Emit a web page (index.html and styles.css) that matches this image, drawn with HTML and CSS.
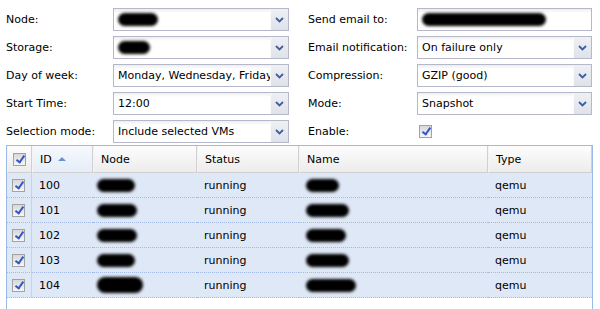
FILE: index.html
```html
<!DOCTYPE html>
<html lang="en">
<head>
<meta charset="UTF-8">
<title>Backup Job</title>
<link rel="stylesheet" href="styles.css">
</head>
<body>
<div class="form">
    <label class="lbl">Node:</label>
    <div class="combo"><div class="combo-text"><span class="blot w40"></span></div><div class="trigger"><svg width="9" height="6" viewBox="0 0 9 6"><path d="M1 1 L4.5 4.5 L8 1" fill="none" stroke="#3d5f9e" stroke-width="1.8"/></svg></div></div>
    <label class="lbl lbl-r">Send email to:</label>
    <div class="combo"><div class="combo-text"><span class="blot w124"></span></div></div>

    <label class="lbl">Storage:</label>
    <div class="combo"><div class="combo-text"><span class="blot w32"></span></div><div class="trigger"><svg width="9" height="6" viewBox="0 0 9 6"><path d="M1 1 L4.5 4.5 L8 1" fill="none" stroke="#3d5f9e" stroke-width="1.8"/></svg></div></div>
    <label class="lbl lbl-r">Email notification:</label>
    <div class="combo"><div class="combo-text">On failure only</div><div class="trigger"><svg width="9" height="6" viewBox="0 0 9 6"><path d="M1 1 L4.5 4.5 L8 1" fill="none" stroke="#3d5f9e" stroke-width="1.8"/></svg></div></div>

    <label class="lbl">Day of week:</label>
    <div class="combo"><div class="combo-text">Monday, Wednesday, Friday</div><div class="trigger"><svg width="9" height="6" viewBox="0 0 9 6"><path d="M1 1 L4.5 4.5 L8 1" fill="none" stroke="#3d5f9e" stroke-width="1.8"/></svg></div></div>
    <label class="lbl lbl-r">Compression:</label>
    <div class="combo"><div class="combo-text">GZIP (good)</div><div class="trigger"><svg width="9" height="6" viewBox="0 0 9 6"><path d="M1 1 L4.5 4.5 L8 1" fill="none" stroke="#3d5f9e" stroke-width="1.8"/></svg></div></div>

    <label class="lbl">Start Time:</label>
    <div class="combo"><div class="combo-text">12:00</div><div class="trigger"><svg width="9" height="6" viewBox="0 0 9 6"><path d="M1 1 L4.5 4.5 L8 1" fill="none" stroke="#3d5f9e" stroke-width="1.8"/></svg></div></div>
    <label class="lbl lbl-r">Mode:</label>
    <div class="combo"><div class="combo-text">Snapshot</div><div class="trigger"><svg width="9" height="6" viewBox="0 0 9 6"><path d="M1 1 L4.5 4.5 L8 1" fill="none" stroke="#3d5f9e" stroke-width="1.8"/></svg></div></div>

    <label class="lbl">Selection mode:</label>
    <div class="combo"><div class="combo-text">Include selected VMs</div><div class="trigger"><svg width="9" height="6" viewBox="0 0 9 6"><path d="M1 1 L4.5 4.5 L8 1" fill="none" stroke="#3d5f9e" stroke-width="1.8"/></svg></div></div>
    <label class="lbl lbl-r">Enable:</label>
    <div class="check-field"><span class="cb"></span></div>
</div>

<div class="grid">
    <table>
        <colgroup>
            <col class="c-check">
            <col class="c-id">
            <col class="c-node">
            <col class="c-status">
            <col class="c-name">
            <col>
        </colgroup>
        <thead>
            <tr>
                <th class="checker"><span class="cb"></span></th>
                <th class="sorted">ID <span class="sort-asc"></span></th>
                <th>Node</th>
                <th>Status</th>
                <th>Name</th>
                <th>Type</th>
            </tr>
        </thead>
        <tbody>
            <tr>
                <td class="checker"><span class="cb"></span></td>
                <td>100</td>
                <td class="pad-node"><span class="blot w38"></span></td>
                <td>running</td>
                <td><span class="blot w33"></span></td>
                <td>qemu</td>
            </tr>
            <tr>
                <td class="checker"><span class="cb"></span></td>
                <td>101</td>
                <td class="pad-node"><span class="blot w40"></span></td>
                <td>running</td>
                <td><span class="blot w43"></span></td>
                <td>qemu</td>
            </tr>
            <tr>
                <td class="checker"><span class="cb"></span></td>
                <td>102</td>
                <td class="pad-node"><span class="blot w40"></span></td>
                <td>running</td>
                <td><span class="blot w40"></span></td>
                <td>qemu</td>
            </tr>
            <tr>
                <td class="checker"><span class="cb"></span></td>
                <td>103</td>
                <td class="pad-node"><span class="blot w38"></span></td>
                <td>running</td>
                <td><span class="blot w43"></span></td>
                <td>qemu</td>
            </tr>
            <tr>
                <td class="checker"><span class="cb"></span></td>
                <td>104</td>
                <td class="pad-node"><span class="blot w46 tall"></span></td>
                <td>running</td>
                <td><span class="blot w50"></span></td>
                <td>qemu</td>
            </tr>
        </tbody>
    </table>
</div>
</body>
</html>
```

FILE: styles.css
```css
/* backup job editor, grey ext-like theme */
body {
    margin: 0;
    background: #fff;
    font-family: "DejaVu Sans", Tahoma, sans-serif;
    font-size: 11px;
    color: #000;
    overflow: hidden;
}

.form {
    display: grid;
    grid-template-columns: 107px 176px 128px 175px;
    grid-auto-rows: 23px;
    row-gap: 5px;
    padding: 8px 0 0 6px;
}

.lbl {
    display: flex;
    align-items: center;
}

.lbl-r {
    padding-left: 19px;
}

.combo {
    display: flex;
    border: 1px solid #b5b8c8;
    background: linear-gradient(#eeeeee, #ffffff 4px);
    overflow: hidden;
}

.combo-text {
    flex: 1;
    display: flex;
    align-items: center;
    padding: 0 4px;
    white-space: nowrap;
    overflow: hidden;
}

.trigger {
    width: 17px;
    display: flex;
    align-items: center;
    justify-content: center;
    border-left: 1px solid #fafafa;
    background: linear-gradient(#eef0f4, #dfe2ea);
}

.check-field {
    display: flex;
    align-items: center;
    padding-left: 2px;
}

/* checkbox */
.cb {
    display: inline-block;
    position: relative;
    width: 11px;
    height: 11px;
    border: 1px solid #a2a2a2;
    background: linear-gradient(#d8d8d8, #f6f6f6);
    vertical-align: middle;
}

.cb::after {
    content: "";
    position: absolute;
    left: 4px;
    top: 0;
    width: 3px;
    height: 7px;
    border: solid #3456c4;
    border-width: 0 2px 2px 0;
    transform: rotate(35deg);
}

/* redacted values */
.blot {
    display: inline-block;
    height: 13px;
    background: #000;
    border-radius: 7px;
    filter: blur(1.5px);
    vertical-align: middle;
}

.blot.tall { height: 16px; border-radius: 8px; }
.w32 { width: 32px; }
.w33 { width: 33px; }
.w38 { width: 38px; }
.w40 { width: 40px; }
.w43 { width: 43px; }
.w46 { width: 46px; }
.w50 { width: 50px; }
.w124 { width: 124px; }

/* grid */
.grid {
    margin: 2px 0 0 6px;
    width: 585px;
    height: 170px;
    border: 1px solid #99bbe8;
    border-bottom: none;
}

.grid table {
    width: 100%;
    table-layout: fixed;
    border-collapse: separate;
    border-spacing: 0;
}

.c-check { width: 25px; }
.c-id { width: 61px; }
.c-node { width: 104px; }
.c-status { width: 102px; }
.c-name { width: 189px; }

.grid th {
    height: 26px;
    padding: 0 7px;
    text-align: left;
    font-weight: normal;
    background: linear-gradient(#fdfdfd, #ececec);
    border-left: 1px solid #f4f4f4;
    border-right: 1px solid #d0d0d0;
    border-bottom: 1px solid #d0d0d0;
}

.grid th.sorted {
    background: linear-gradient(#f6f9fe, #e6edf8);
}

.grid th.checker {
    padding: 0 0 0 5px;
}

.sort-asc {
    display: inline-block;
    width: 0;
    height: 0;
    margin-left: 3px;
    border-left: 4px solid transparent;
    border-right: 4px solid transparent;
    border-bottom: 4px solid #6b93d0;
    vertical-align: 2px;
}

.grid td {
    height: 24px;
    padding: 0 7px;
    background: #dfe8f6;
    border-bottom: 1px dotted #a3bae9;
    white-space: nowrap;
    overflow: hidden;
}

.grid td.checker {
    padding: 0 0 0 5px;
    border-right: 1px solid #c4d3ea;
}

.grid td.pad-node {
    padding-left: 4px;
}
```
